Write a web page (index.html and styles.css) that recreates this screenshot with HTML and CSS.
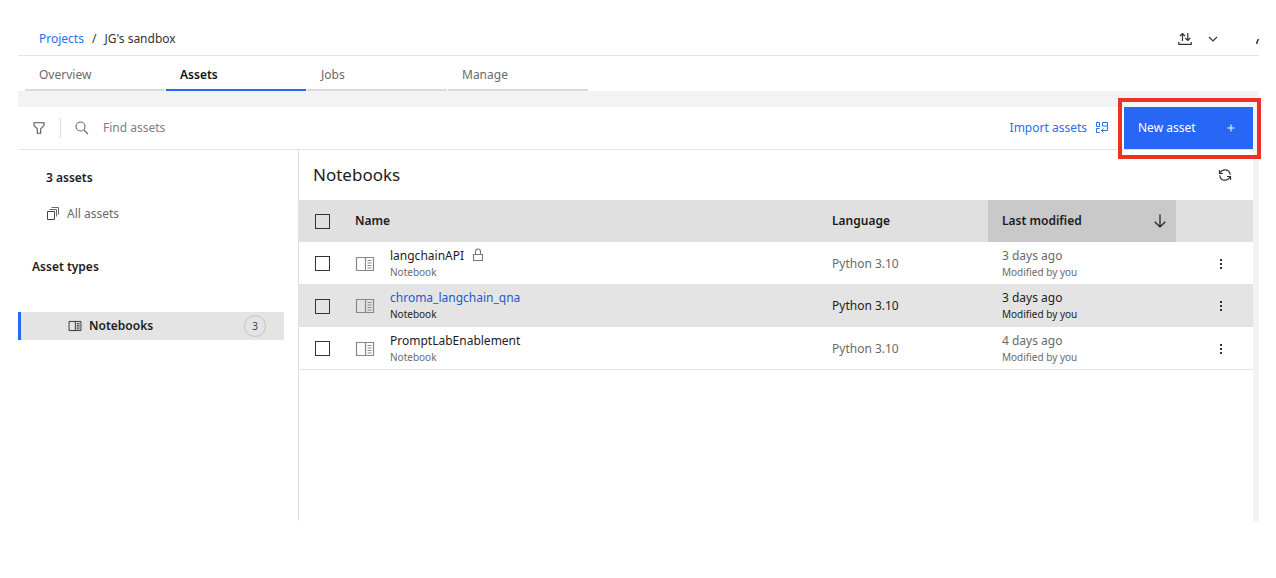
FILE: index.html
```html
<!DOCTYPE html>
<html lang="en">
<head>
<meta charset="utf-8">
<title>JG's sandbox - Assets</title>
<link rel="stylesheet" href="styles.css">
</head>
<body>
<svg class="symbols" aria-hidden="true">
  <symbol id="notebook" viewBox="0 0 20 16"><path d="M1.500 1.500h17v13h-17zM10.500 1.500v13M12.500 4.500h4M12.500 7h4M12.500 9.500h4M12.500 12h4" fill="none" stroke="currentColor" stroke-width="1.200"/></symbol>
  <symbol id="dots" viewBox="0 0 14 14"><path d="M6 2h2v2H6zM6 6h2v2H6zM6 10h2v2H6z" fill="currentColor"/></symbol>
</svg>
<div class="app">
  <header class="topbar">
    <nav class="crumbs" aria-label="Breadcrumb"><a href="#">Projects</a><span>/</span><span>JG's sandbox</span></nav>
    <div class="top-actions">
      <button class="icon-btn" aria-label="Upload and download"><svg width="14" height="14" viewBox="0 0 14 14" fill="none" stroke="currentColor" stroke-width="1.200"><path d="M4.500 9V1.500M2 4l2.500-2.500L7 4M9.800 1v7.500M7.300 6l2.500 2.500L12.300 6M.8 10v2.400h12.400V10"/></svg></button>
      <button class="icon-btn" aria-label="Expand"><svg width="14" height="14" viewBox="0 0 14 14" fill="none" stroke="currentColor" stroke-width="1.200"><path d="m3 5 4 4 4-4"/></svg></button>
      <button class="icon-btn cut" aria-label="Edit"><svg width="14" height="14" viewBox="0 0 14 14" fill="none" stroke="currentColor" stroke-width="1.500"><path d="M1 12v-2l1.500-3"/></svg></button>
    </div>
  </header>
  <nav class="tabs" aria-label="Project">
    <a href="#">Overview</a><a href="#" class="active" aria-current="page">Assets</a><a href="#">Jobs</a><a href="#">Manage</a>
  </nav>
  <main class="workspace">
    <div class="toolbar">
      <button class="icon-btn filter" aria-label="Filter"><svg width="14" height="14" viewBox="0 0 14 14" fill="none" stroke="currentColor" stroke-width="1.100"><path d="M2 1.800h10v2.500L8.700 8v4.300H5.300V8L2 4.300z"/></svg></button>
      <label class="search">
        <svg width="14" height="14" viewBox="0 0 14 14" fill="none" stroke="currentColor" stroke-width="1.100"><circle cx="5.500" cy="5.500" r="4.500"/><path d="m9 9 4 4"/></svg>
        <input type="search" placeholder="Find assets" aria-label="Find assets">
      </label>
      <button class="import">Import assets
        <svg width="14" height="12" viewBox="0 0 14 12" fill="none" stroke="currentColor"><path d="M1.500.5h3v4h-3zM4.500 6.500h-3v4h3M7.500.5h5v3.500h-5zM12.500 4v4.500H6.500M8.500 6.500l-2 2 2 2"/></svg>
      </button>
      <div class="new-wrap">
        <button class="new">New asset
          <svg width="8" height="8" viewBox="0 0 8 8" stroke="currentColor"><path d="M4 .5v7M.5 4h7"/></svg>
        </button>
        <span class="highlight"></span>
      </div>
    </div>
    <div class="columns">
      <aside class="sidebar">
        <h2 class="count">3 assets</h2>
        <a class="all" href="#"><svg width="14" height="14" viewBox="0 0 14 14"  fill="none" stroke="currentColor"><path d="M1.500 4.500h7v8h-7z" stroke="#444"/><path d="M3.500 2.500h7v7M5.500.5h7v7"/></svg>All assets</a>
        <h2 class="types">Asset types</h2>
        <a class="type" href="#"><svg width="14" height="12"><use href="#notebook"/></svg><span>Notebooks</span><span class="badge">3</span></a>
      </aside>
      <section class="content">
        <div class="title-row">
          <h1>Notebooks</h1>
          <button class="icon-btn" aria-label="Refresh"><svg width="14" height="14" viewBox="0 0 14 14" fill="none" stroke="currentColor" stroke-width="1.200"><path d="M2 5.500C3 3 4.800 1.800 7 1.800c2.800 0 5 2 5.200 5M1.500 2v3.500H5M12 8.500c-1 2.500-2.800 3.700-5 3.700-2.800 0-5-2-5.200-5M12.500 12V8.500H9"/></svg></button>
        </div>
        <table>
          <colgroup><col class="c-check"><col class="c-icon"><col><col class="c-lang"><col class="c-mod"><col class="c-act"></colgroup>
          <thead>
            <tr>
              <th><input type="checkbox" aria-label="Select all"></th>
              <th colspan="2">Name</th>
              <th class="lang">Language</th>
              <th class="sorted" aria-sort="descending"><button>Last modified<svg width="14" height="14" viewBox="0 0 14 14" fill="none" stroke="currentColor" stroke-width="1.200"><path d="M7 .5v12.500M1.700 7.800 7 13l5.300-5.200"/></svg></button></th>
              <th></th>
            </tr>
          </thead>
          <tbody>
            <tr>
              <td><input type="checkbox" aria-label="Select langchainAPI"></td>
              <td class="kind"><svg width="20" height="16"><use href="#notebook"/></svg></td>
              <td><div class="name"><a href="#">langchainAPI</a><svg width="12" height="14" viewBox="0 0 12 14" fill="none" stroke="#777" stroke-width="1.100"><path d="M1.500 6.500h9v6h-9zM3.500 6.500V3.500a2.500 2.500 0 0 1 5 0v3"/></svg></div><div class="sub">Notebook</div></td>
              <td class="lang">Python 3.10</td>
              <td class="mod"><div>3 days ago</div><div class="sub">Modified by you</div></td>
              <td><button class="icon-btn more" aria-label="Actions"><svg width="14" height="14"><use href="#dots"/></svg></button></td>
            </tr>
            <tr class="hover">
              <td><input type="checkbox" aria-label="Select chroma_langchain_qna"></td>
              <td class="kind"><svg width="20" height="16"><use href="#notebook"/></svg></td>
              <td><div class="name"><a href="#">chroma_langchain_qna</a></div><div class="sub">Notebook</div></td>
              <td class="lang">Python 3.10</td>
              <td class="mod"><div>3 days ago</div><div class="sub">Modified by you</div></td>
              <td><button class="icon-btn more" aria-label="Actions"><svg width="14" height="14"><use href="#dots"/></svg></button></td>
            </tr>
            <tr>
              <td><input type="checkbox" aria-label="Select PromptLabEnablement"></td>
              <td class="kind"><svg width="20" height="16"><use href="#notebook"/></svg></td>
              <td><div class="name"><a href="#">PromptLabEnablement</a></div><div class="sub">Notebook</div></td>
              <td class="lang">Python 3.10</td>
              <td class="mod"><div>4 days ago</div><div class="sub">Modified by you</div></td>
              <td><button class="icon-btn more" aria-label="Actions"><svg width="14" height="14"><use href="#dots"/></svg></button></td>
            </tr>
          </tbody>
        </table>
      </section>
    </div>
  </main>
</div>
</body>
</html>
```
FILE: styles.css
```css
* { box-sizing: border-box; }
body { margin: 0; background: #fff; color: #1c1c1c; font: 12px/16px "Noto Sans", sans-serif; }
button, input { font: inherit; color: inherit; }
button { border: 0; padding: 0; background: none; cursor: pointer; }
a { color: inherit; text-decoration: none; }
h1, h2 { margin: 0; }
svg { display: block; flex: none; }
.symbols { position: absolute; width: 0; height: 0; }
.app { margin: 20px 17px 0 18px; }

.topbar { display: flex; justify-content: space-between; align-items: center; height: 36px; padding: 2px 0 0 21px; border-bottom: 1px solid #e4e4e4; }
.crumbs { display: flex; gap: 8px; color: #333; }
.crumbs a, .import { color: #2b6cf0; }
.top-actions { display: flex; align-items: center; gap: 14px; }
.icon-btn { display: grid; place-items: center; color: #333; }
.cut { width: 3px; margin-left: 22px; overflow: hidden; justify-items: start; }

.tabs { display: flex; gap: 1px; padding-left: 7px; }
.tabs a { width: 140px; padding: 11px 14px 6px; border-bottom: 2px solid #dcdcdc; color: #6a6a6a; }
.tabs .active { border-color: #2a67f5; color: #111; font-weight: 600; }

.workspace { padding: 16px 6px 0 0; background: #f3f3f3; }
.toolbar { display: flex; height: 43px; background: #fff; border-bottom: 1px solid #e4e4e4; }
.filter { width: 42px; color: #555; }
.search { display: flex; flex: 1; align-items: center; gap: 14px; padding-left: 15px; color: #6a6a6a; background: linear-gradient(#ddd, #ddd) left center / 1px 20px no-repeat; }
.search input { flex: 1; min-width: 0; border: 0; padding: 0; background: none; outline: 0; }
.search input::placeholder { color: #808080; opacity: 1; }
.import { display: flex; align-items: center; gap: 8px; padding: 0 15px; }
.new-wrap { position: relative; display: flex; width: 129px; height: 42px; }
.new { display: flex; flex: 1; justify-content: space-between; align-items: center; padding: 0 18px 0 14px; background: #2866f6; color: #fff; }
.highlight { position: absolute; inset: -9px -8px -10px -6px; border: 4px solid #ee3124; pointer-events: none; }

.columns { display: flex; min-height: 371px; background: #fff; }
.sidebar { width: 280px; padding-top: 20px; }
.sidebar h2 { font-size: 12px; line-height: 16px; font-weight: 600; }
.count { padding-left: 28px; }
.all { display: flex; align-items: center; gap: 7px; margin-top: 20px; padding-left: 28px; color: #6a6a6a; }
.types { margin-top: 37px; padding-left: 14px; }
.type { display: flex; align-items: center; gap: 7px; height: 28px; margin: 37px 14px 0 0; padding: 0 18px 0 47px; border-left: 3px solid #2a67f5; background: #e4e4e4; font-weight: 600; }
.badge { width: 22px; margin-left: auto; border: 1px solid #c4c4c4; border-radius: 11px; font-size: 10px; font-weight: 400; line-height: 20px; text-align: center; color: #444; }

.content { flex: 1; min-width: 0; border-left: 1px solid #e0e0e0; }
.title-row { display: flex; justify-content: space-between; align-items: center; height: 50px; padding: 0 21px 0 14px; }
h1 { font-size: 17px; line-height: 24px; font-weight: 400; }
table { width: 100%; table-layout: fixed; border-collapse: separate; border-spacing: 0; }
.c-check { width: 56px; }
.c-icon { width: 35px; }
.c-lang { width: 170px; }
.c-mod { width: 188px; }
.c-act { width: 77px; }
th { height: 42px; padding: 0; background: #e0e0e0; font-weight: 600; text-align: left; }
td { height: 42px; padding: 1px 0 0; color: #6a6a6a; }
tbody tr:last-child td { height: 43px; border-bottom: 1px solid #e4e4e4; }
.hover td { height: 43px; background: #e4e4e4; color: #1c1c1c; }
input[type="checkbox"] { display: block; appearance: none; width: 15px; height: 15px; margin: 0 0 0 16px; border: 1px solid #333; }
th.lang, td.lang, td.mod { padding-left: 14px; }
.sorted button { display: flex; justify-content: space-between; align-items: center; width: 100%; height: 42px; padding: 0 9px 0 14px; background: #c9c9c9; font-weight: 600; }
.name { display: flex; gap: 8px; color: #1c1c1c; }
.hover .name { color: #2858cc; }
.kind svg { color: #888; }
.sub { font-size: 10px; }
.more { width: 14px; margin-left: 38px; }
```
